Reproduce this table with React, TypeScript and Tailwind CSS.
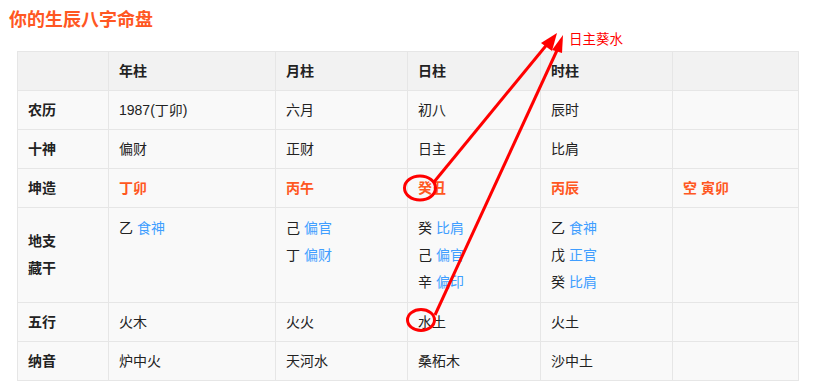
import React from "react";

const font = { fontFamily: '"Liberation Sans", "Noto Sans CJK SC", sans-serif' };

type Hidden = { stem: string; god: string };

const Stem = ({ items }: { items: Hidden[] }) => (
  <div className="flex flex-col">
    {items.map((h, i) => (
      <div key={i} className="h-[27px] leading-[27px]">
        <span className="text-[#222]">{h.stem}</span>{" "}
        <span className="text-[#409eff]">{h.god}</span>
      </div>
    ))}
  </div>
);

export default function App() {
  const td = "border border-[#e6e6e6] px-[10px] h-[39px] align-middle";
  const th = "border border-[#e6e6e6] px-[10px] h-[39px] align-middle font-bold text-left";
  const orange = "text-[#ff5722] font-bold";
  const hid = "border border-[#e6e6e6] px-[10px] pt-[7px] pb-[6px] align-top";
  return (
    <div className="relative w-[816px] h-[390px] bg-white pt-[7px]" style={font}>
      <div className="pl-[9px] h-[27px] leading-[27px] text-[18px] font-bold text-[#ff5722]">你的生辰八字命盘</div>
      <table className="ml-[17px] mt-[17px] w-[781px] table-fixed border-collapse text-[14px] text-[#222]">
        <colgroup>
          <col className="w-[91px]" />
          <col className="w-[167px]" />
          <col className="w-[132px]" />
          <col className="w-[133px]" />
          <col className="w-[132px]" />
          <col className="w-[126px]" />
        </colgroup>
        <thead>
          <tr className="bg-[#f2f2f2]">
            <th className={th}></th>
            <th className={th}>年柱</th>
            <th className={th}>月柱</th>
            <th className={th}>日柱</th>
            <th className={th}>时柱</th>
            <th className={th}></th>
          </tr>
        </thead>
        <tbody className="bg-[#f9f9f9]">
          <tr>
            <td className={td + " font-bold"}>农历</td>
            <td className={td}>1987(丁卯)</td>
            <td className={td}>六月</td>
            <td className={td}>初八</td>
            <td className={td}>辰时</td>
            <td className={td}></td>
          </tr>
          <tr>
            <td className={td + " font-bold"}>十神</td>
            <td className={td}>偏财</td>
            <td className={td}>正财</td>
            <td className={td}>日主</td>
            <td className={td}>比肩</td>
            <td className={td}></td>
          </tr>
          <tr>
            <td className={td + " font-bold"}>坤造</td>
            <td className={td + " " + orange}>丁卯</td>
            <td className={td + " " + orange}>丙午</td>
            <td className={td + " " + orange}>癸丑</td>
            <td className={td + " " + orange}>丙辰</td>
            <td className={td + " " + orange}>空 寅卯</td>
          </tr>
          <tr>
            <td className="border border-[#e6e6e6] px-[10px] h-[95px] align-middle font-bold">
              <div className="leading-[27px]">地支</div>
              <div className="leading-[27px]">藏干</div>
            </td>
            <td className={hid}>
              <Stem items={[{ stem: "乙", god: "食神" }]} />
            </td>
            <td className={hid}>
              <Stem items={[{ stem: "己", god: "偏官" }, { stem: "丁", god: "偏财" }]} />
            </td>
            <td className={hid}>
              <Stem items={[{ stem: "癸", god: "比肩" }, { stem: "己", god: "偏官" }, { stem: "辛", god: "偏印" }]} />
            </td>
            <td className={hid}>
              <Stem items={[{ stem: "乙", god: "食神" }, { stem: "戊", god: "正官" }, { stem: "癸", god: "比肩" }]} />
            </td>
            <td className={hid}></td>
          </tr>
          <tr>
            <td className={td + " font-bold"}>五行</td>
            <td className={td}>火木</td>
            <td className={td}>火火</td>
            <td className={td}>水土</td>
            <td className={td}>火土</td>
            <td className={td}></td>
          </tr>
          <tr>
            <td className={td + " font-bold"}>纳音</td>
            <td className={td}>炉中火</td>
            <td className={td}>天河水</td>
            <td className={td}>桑柘木</td>
            <td className={td}>沙中土</td>
            <td className={td}></td>
          </tr>
        </tbody>
      </table>

      <div className="absolute left-[569px] top-[31px] text-[13.5px] leading-[18px] text-[#ff0000]">日主葵水</div>

      <svg className="absolute left-0 top-0 pointer-events-none" width="816" height="390" viewBox="0 0 816 390">
        <ellipse cx="420" cy="188" rx="15.5" ry="12" fill="none" stroke="#ff0000" strokeWidth="3" />
        <ellipse cx="421" cy="320" rx="13.5" ry="10.5" fill="none" stroke="#ff0000" strokeWidth="3" />
        <line x1="434" y1="182" x2="549" y2="42" stroke="#ff0000" strokeWidth="3" />
        <polygon points="557,33 541,43 552,51" fill="#ff0000" />
        <line x1="435" y1="315" x2="559" y2="46" stroke="#ff0000" strokeWidth="3" />
        <polygon points="563,35 552,50 562,53" fill="#ff0000" />
      </svg>
    </div>
  );
}
